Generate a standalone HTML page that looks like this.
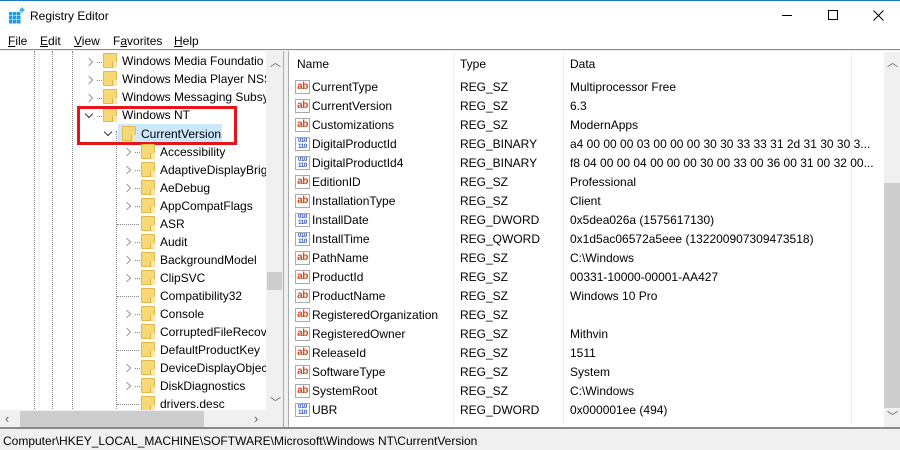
<!DOCTYPE html>
<html><head><meta charset="utf-8"><style>
*{margin:0;padding:0;box-sizing:border-box}
body{width:900px;height:450px;overflow:hidden;background:#f0f0f0;font-family:"Liberation Sans",sans-serif;font-size:12px;color:#000;position:relative}
.abs{position:absolute}
.t{position:absolute;white-space:nowrap;line-height:14px}
.fold{position:absolute;width:14px;height:15px;background:#f8d775;border:1px solid #e2b94a;border-radius:1px}
.fold:after{content:"";position:absolute;right:-1px;bottom:-1px;width:4px;height:6px;background:#fbe6a5;border-left:1px solid #dcb04a}
.chev{position:absolute;width:6px;height:6px;border-right:1.5px solid #999;border-bottom:1.5px solid #999}
.r{transform:rotate(-45deg)}
.d{transform:rotate(45deg);border-color:#333}
.dots{position:absolute;border-left:1px dotted #888}
.hd{position:absolute;border-top:1px dotted #888;height:1px}
.ab{position:absolute;left:295px;width:15px;height:14px;background:#fff;border:1px solid #aaa;color:#d04a1e;font-weight:bold;font-size:10px;line-height:11px;text-align:center;letter-spacing:-0.5px}
.bi{position:absolute;left:295px;width:15px;height:14px;background:#fff;border:1px solid #aaa;color:#2a52be;font-weight:bold;font-size:6px;line-height:6px;text-align:center;letter-spacing:-0.3px;overflow:hidden}
.rp .t,.rp .ab,.rp .bi{margin-top:1px}
</style></head><body>
<div class="abs" style="left:0;top:0;width:900px;height:32px;background:#fff;border-top:1px solid #1979ca"></div>
<svg class="abs" style="left:8px;top:7px" width="18" height="18" viewBox="0 0 18 18">
<g fill="#1e9be6"><rect x="1" y="5" width="3.5" height="3.5"/><rect x="5" y="5" width="3.5" height="3.5"/><rect x="9" y="5" width="3.5" height="3.5"/><rect x="1" y="9" width="3.5" height="3.5"/><rect x="5" y="9" width="3.5" height="3.5"/><rect x="9" y="9" width="3.5" height="3.5"/><rect x="1" y="13" width="3.5" height="3.5"/><rect x="5" y="13" width="3.5" height="3.5"/><rect x="9" y="13" width="3.5" height="3.5"/></g>
<rect x="12" y="1" width="4" height="4" fill="#3fb6f0" transform="rotate(45 14 3)"/></svg>
<div class="t" style="left:30px;top:9px;font-size:12px">Registry Editor</div>
<div class="abs" style="left:782px;top:15px;width:10px;height:1px;background:#000"></div>
<div class="abs" style="left:828px;top:10px;width:10px;height:10px;border:1px solid #000"></div>
<svg class="abs" style="left:873px;top:10px" width="11" height="11" viewBox="0 0 11 11"><path d="M0.5 0.5L10.5 10.5M10.5 0.5L0.5 10.5" stroke="#000" stroke-width="1"/></svg>
<div class="abs" style="left:0;top:32px;width:900px;height:18px;background:#fff;border-bottom:1px solid #888"></div>
<div class="t" style="left:8px;top:34px"><u>F</u>ile</div>
<div class="t" style="left:40px;top:34px"><u>E</u>dit</div>
<div class="t" style="left:74px;top:34px"><u>V</u>iew</div>
<div class="t" style="left:113px;top:34px">F<u>a</u>vorites</div>
<div class="t" style="left:174px;top:34px"><u>H</u>elp</div>
<div class="abs" style="left:0;top:51px;width:284px;height:377px;background:#fff;border-right:1px solid #aaa;overflow:hidden">
<div class="dots" style="left:34px;top:0;height:360px"></div>
<div class="dots" style="left:52px;top:0;height:360px"></div>
<div class="dots" style="left:72px;top:0;height:360px"></div>
<div class="dots" style="left:116px;top:80px;height:280px"></div>
</div>
<div class="chev r" style="left:86px;top:59px"></div><div class="hd" style="left:97px;top:62px;width:5px"></div><div class="fold" style="left:103px;top:53px"></div><div class="t" style="left:122px;top:54px">Windows Media Foundatio</div>
<div class="chev r" style="left:86px;top:77px"></div><div class="hd" style="left:97px;top:80px;width:5px"></div><div class="fold" style="left:103px;top:71px"></div><div class="t" style="left:122px;top:72px">Windows Media Player NSS</div>
<div class="chev r" style="left:86px;top:95px"></div><div class="hd" style="left:97px;top:98px;width:5px"></div><div class="fold" style="left:103px;top:89px"></div><div class="t" style="left:122px;top:90px">Windows Messaging Subsy</div>
<div class="chev d" style="left:86px;top:111px"></div><div class="hd" style="left:97px;top:116px;width:5px"></div><div class="fold" style="left:103px;top:107px"></div><div class="t" style="left:122px;top:108px">Windows NT</div>
<div class="abs" style="left:118px;top:124px;width:104px;height:19px;background:#cce8ff"></div>
<div class="chev d" style="left:105px;top:129px"></div><div class="fold" style="left:122px;top:126px"></div><div class="t" style="left:141px;top:127px">CurrentVersion</div>
<div class="abs" style="left:77px;top:106px;width:160px;height:39px;border:3px solid #e8141c"></div>
<div class="chev r" style="left:124px;top:149px"></div><div class="hd" style="left:135px;top:152px;width:5px"></div><div class="fold" style="left:141px;top:144px"></div><div class="t" style="left:160px;top:145px">Accessibility</div>
<div class="chev r" style="left:124px;top:167px"></div><div class="hd" style="left:135px;top:170px;width:5px"></div><div class="fold" style="left:141px;top:162px"></div><div class="t" style="left:160px;top:163px">AdaptiveDisplayBrig</div>
<div class="chev r" style="left:124px;top:185px"></div><div class="hd" style="left:135px;top:188px;width:5px"></div><div class="fold" style="left:141px;top:180px"></div><div class="t" style="left:160px;top:181px">AeDebug</div>
<div class="chev r" style="left:124px;top:203px"></div><div class="hd" style="left:135px;top:206px;width:5px"></div><div class="fold" style="left:141px;top:198px"></div><div class="t" style="left:160px;top:199px">AppCompatFlags</div>
<div class="hd" style="left:117px;top:224px;width:22px"></div><div class="fold" style="left:141px;top:216px"></div><div class="t" style="left:160px;top:217px">ASR</div>
<div class="chev r" style="left:124px;top:239px"></div><div class="hd" style="left:135px;top:242px;width:5px"></div><div class="fold" style="left:141px;top:234px"></div><div class="t" style="left:160px;top:235px">Audit</div>
<div class="chev r" style="left:124px;top:257px"></div><div class="hd" style="left:135px;top:260px;width:5px"></div><div class="fold" style="left:141px;top:252px"></div><div class="t" style="left:160px;top:253px">BackgroundModel</div>
<div class="chev r" style="left:124px;top:275px"></div><div class="hd" style="left:135px;top:278px;width:5px"></div><div class="fold" style="left:141px;top:270px"></div><div class="t" style="left:160px;top:271px">ClipSVC</div>
<div class="hd" style="left:117px;top:296px;width:22px"></div><div class="fold" style="left:141px;top:288px"></div><div class="t" style="left:160px;top:289px">Compatibility32</div>
<div class="chev r" style="left:124px;top:311px"></div><div class="hd" style="left:135px;top:314px;width:5px"></div><div class="fold" style="left:141px;top:306px"></div><div class="t" style="left:160px;top:307px">Console</div>
<div class="chev r" style="left:124px;top:329px"></div><div class="hd" style="left:135px;top:332px;width:5px"></div><div class="fold" style="left:141px;top:324px"></div><div class="t" style="left:160px;top:325px">CorruptedFileRecov</div>
<div class="hd" style="left:117px;top:350px;width:22px"></div><div class="fold" style="left:141px;top:342px"></div><div class="t" style="left:160px;top:343px">DefaultProductKey</div>
<div class="chev r" style="left:124px;top:365px"></div><div class="hd" style="left:135px;top:368px;width:5px"></div><div class="fold" style="left:141px;top:360px"></div><div class="t" style="left:160px;top:361px">DeviceDisplayObject</div>
<div class="chev r" style="left:124px;top:383px"></div><div class="hd" style="left:135px;top:386px;width:5px"></div><div class="fold" style="left:141px;top:378px"></div><div class="t" style="left:160px;top:379px">DiskDiagnostics</div>
<div class="hd" style="left:117px;top:404px;width:22px"></div><div class="fold" style="left:141px;top:396px"></div><div class="t" style="left:160px;top:397px">drivers.desc</div>
<div class="abs" style="left:266px;top:51px;width:17px;height:359px;background:#f0f0f0"></div>
<div class="t" style="left:270px;top:56px;color:#606060;font-size:11px">︿</div>
<div class="abs" style="left:267px;top:272px;width:15px;height:18px;background:#cdcdcd"></div>
<div class="t" style="left:270px;top:396px;color:#606060;font-size:11px">﹀</div>
<div class="abs" style="left:0;top:410px;width:283px;height:18px;background:#f0f0f0"></div>
<div class="abs" style="left:20px;top:411px;width:184px;height:16px;background:#cdcdcd"></div>
<div class="t" style="left:5px;top:412px;color:#606060;font-size:13px">‹</div>
<div class="t" style="left:254px;top:412px;color:#606060;font-size:13px">›</div>
<div class="abs" style="left:288px;top:51px;width:612px;height:377px;background:#fff;border-left:1px solid #aaa"></div>
<div class="abs" style="left:453px;top:52px;width:1px;height:375px;background:#eef2f7"></div>
<div class="abs" style="left:563px;top:52px;width:1px;height:375px;background:#eef2f7"></div>
<div class="abs" style="left:851px;top:52px;width:1px;height:375px;background:#eef2f7"></div>
<div class="t" style="left:297px;top:57px">Name</div>
<div class="t" style="left:460px;top:57px">Type</div>
<div class="t" style="left:570px;top:57px">Data</div>
<div class="abs" style="left:884px;top:52px;width:16px;height:375px;background:#f0f0f0"></div>
<div class="abs" style="left:884px;top:183px;width:16px;height:225px;background:#cdcdcd"></div>
<div class="t" style="left:887px;top:56px;color:#606060;font-size:11px">︿</div>
<div class="t" style="left:887px;top:410px;color:#606060;font-size:11px">﹀</div>
<div class="rp">
<div class="ab" style="top:79px">ab</div><div class="t" style="left:312px;top:79px">CurrentType</div><div class="t" style="left:460px;top:79px">REG_SZ</div><div class="t" style="left:570px;top:79px">Multiprocessor Free</div>
<div class="ab" style="top:98px">ab</div><div class="t" style="left:312px;top:98px">CurrentVersion</div><div class="t" style="left:460px;top:98px">REG_SZ</div><div class="t" style="left:570px;top:98px">6.3</div>
<div class="ab" style="top:117px">ab</div><div class="t" style="left:312px;top:117px">Customizations</div><div class="t" style="left:460px;top:117px">REG_SZ</div><div class="t" style="left:570px;top:117px">ModernApps</div>
<div class="bi" style="top:136px">010<br>110</div><div class="t" style="left:312px;top:136px">DigitalProductId</div><div class="t" style="left:460px;top:136px">REG_BINARY</div><div class="t" style="left:570px;top:136px">a4 00 00 00 03 00 00 00 30 30 33 33 31 2d 31 30 30 3...</div>
<div class="bi" style="top:155px">010<br>110</div><div class="t" style="left:312px;top:155px">DigitalProductId4</div><div class="t" style="left:460px;top:155px">REG_BINARY</div><div class="t" style="left:570px;top:155px">f8 04 00 00 04 00 00 00 30 00 33 00 36 00 31 00 32 00...</div>
<div class="ab" style="top:174px">ab</div><div class="t" style="left:312px;top:174px">EditionID</div><div class="t" style="left:460px;top:174px">REG_SZ</div><div class="t" style="left:570px;top:174px">Professional</div>
<div class="ab" style="top:193px">ab</div><div class="t" style="left:312px;top:193px">InstallationType</div><div class="t" style="left:460px;top:193px">REG_SZ</div><div class="t" style="left:570px;top:193px">Client</div>
<div class="bi" style="top:212px">010<br>110</div><div class="t" style="left:312px;top:212px">InstallDate</div><div class="t" style="left:460px;top:212px">REG_DWORD</div><div class="t" style="left:570px;top:212px">0x5dea026a (1575617130)</div>
<div class="bi" style="top:231px">010<br>110</div><div class="t" style="left:312px;top:231px">InstallTime</div><div class="t" style="left:460px;top:231px">REG_QWORD</div><div class="t" style="left:570px;top:231px">0x1d5ac06572a5eee (132200907309473518)</div>
<div class="ab" style="top:250px">ab</div><div class="t" style="left:312px;top:250px">PathName</div><div class="t" style="left:460px;top:250px">REG_SZ</div><div class="t" style="left:570px;top:250px">C:\Windows</div>
<div class="ab" style="top:269px">ab</div><div class="t" style="left:312px;top:269px">ProductId</div><div class="t" style="left:460px;top:269px">REG_SZ</div><div class="t" style="left:570px;top:269px">00331-10000-00001-AA427</div>
<div class="ab" style="top:288px">ab</div><div class="t" style="left:312px;top:288px">ProductName</div><div class="t" style="left:460px;top:288px">REG_SZ</div><div class="t" style="left:570px;top:288px">Windows 10 Pro</div>
<div class="ab" style="top:307px">ab</div><div class="t" style="left:312px;top:307px">RegisteredOrganization</div><div class="t" style="left:460px;top:307px">REG_SZ</div>
<div class="ab" style="top:326px">ab</div><div class="t" style="left:312px;top:326px">RegisteredOwner</div><div class="t" style="left:460px;top:326px">REG_SZ</div><div class="t" style="left:570px;top:326px">Mithvin</div>
<div class="ab" style="top:345px">ab</div><div class="t" style="left:312px;top:345px">ReleaseId</div><div class="t" style="left:460px;top:345px">REG_SZ</div><div class="t" style="left:570px;top:345px">1511</div>
<div class="ab" style="top:364px">ab</div><div class="t" style="left:312px;top:364px">SoftwareType</div><div class="t" style="left:460px;top:364px">REG_SZ</div><div class="t" style="left:570px;top:364px">System</div>
<div class="ab" style="top:383px">ab</div><div class="t" style="left:312px;top:383px">SystemRoot</div><div class="t" style="left:460px;top:383px">REG_SZ</div><div class="t" style="left:570px;top:383px">C:\Windows</div>
<div class="bi" style="top:402px">010<br>110</div><div class="t" style="left:312px;top:402px">UBR</div><div class="t" style="left:460px;top:402px">REG_DWORD</div><div class="t" style="left:570px;top:402px">0x000001ee (494)</div>
</div>
<div class="abs" style="left:0;top:427px;width:900px;height:2px;background:#8a8a8a"></div>
<div class="t" style="left:3px;top:434px">Computer\HKEY_LOCAL_MACHINE\SOFTWARE\Microsoft\Windows NT\CurrentVersion</div>
</body></html>
